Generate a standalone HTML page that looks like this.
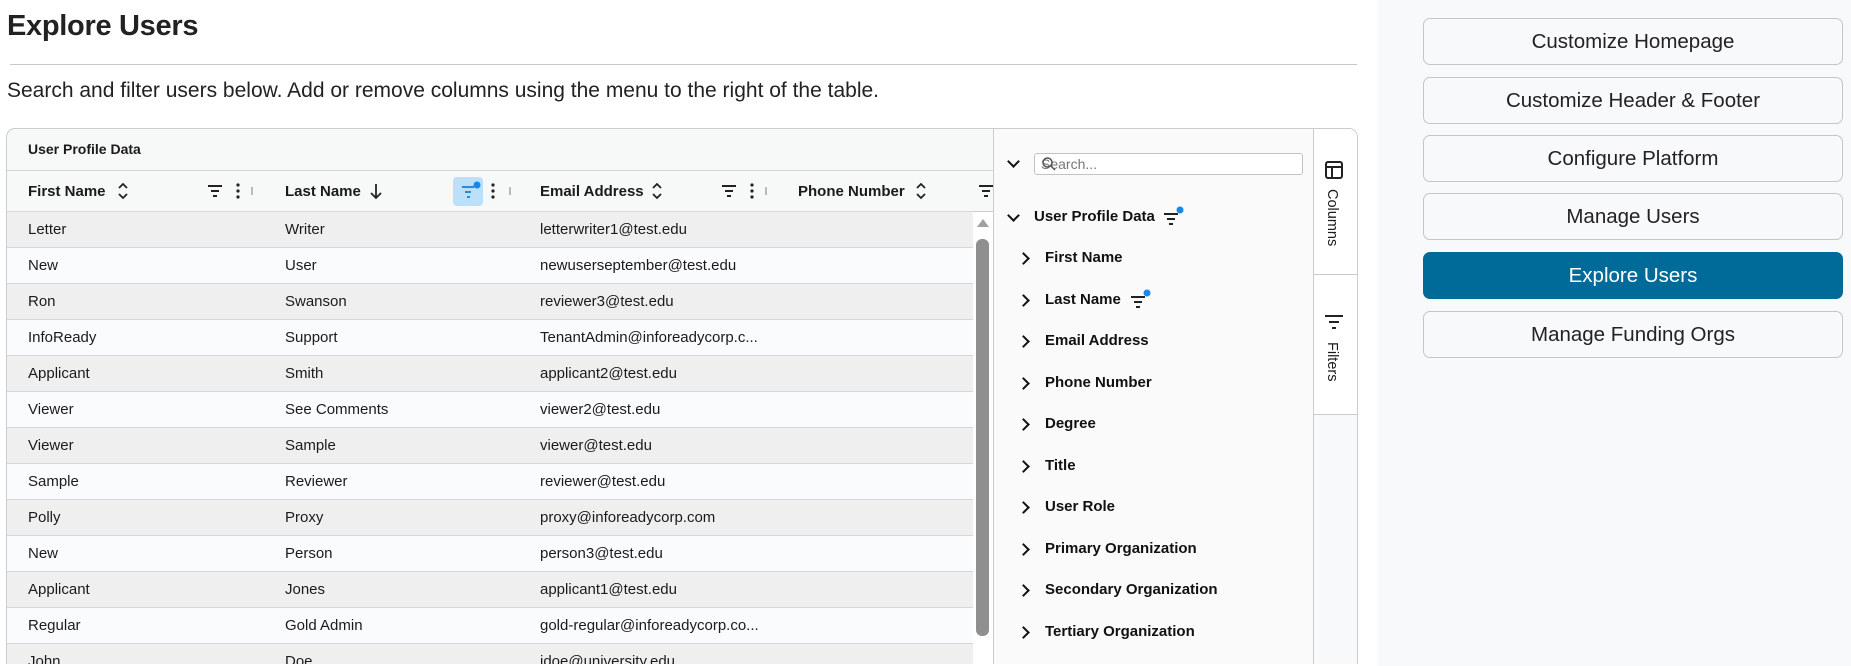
<!DOCTYPE html>
<html style="overflow:hidden;width:1851px;height:666px"><head><meta charset="utf-8"><style>
*{box-sizing:border-box;margin:0;padding:0}
body{width:1851px;height:666px;overflow:hidden;background:#fff;font-family:"Liberation Sans",sans-serif;color:#1b1b1b;position:relative}
.a{position:absolute}
h1{position:absolute;left:7px;top:10px;font-size:29px;font-weight:bold;color:#222;letter-spacing:-0.3px}
.hr{left:10px;top:64px;width:1347px;height:1px;background:#c8c8c8}
.sub{left:7px;top:79px;font-size:21px;color:#222}
.tbl{left:6px;top:128px;width:1352px;height:536px;border:1px solid #c9cdd1;border-bottom:none;border-radius:9px 9px 0 0;overflow:hidden;background:#f7f8f8}
.row{position:absolute;left:0;width:966px;height:36px;border-top:1px solid #d4d8dc;font-size:15px;line-height:35px}
.row span{position:absolute}
.hd{font-size:15px;font-weight:bold}
.rp{left:1378px;top:0;width:473px;height:666px;background:#f8f9fa}
.btn{position:absolute;left:1423px;width:420px;height:47px;border:1px solid #c4c6c8;border-radius:7px;background:#f8f9fa;font-size:20.5px;text-align:center;line-height:45px;color:#222}
.it{position:absolute;left:1045px;font-size:15px;font-weight:bold;color:#111}
.ch{position:absolute;left:1019px;width:9px;height:9px;border-right:2px solid #111;border-top:2px solid #111;transform:rotate(45deg)}
</style></head><body>
<h1>Explore Users</h1>
<div class="a hr"></div>
<div class="a sub">Search and filter users below. Add or remove columns using the menu to the right of the table.</div>
<div class="a tbl">
 <div class="a hd" style="left:21px;top:12px;font-size:14px">User Profile Data</div>
 <div class="a" style="left:0;top:41px;width:986px;height:1px;background:#d4d8dc"></div>
 <div class="a hd" style="left:21px;top:54px">First Name</div>
 <svg class="a" style="left:110px;top:52px" width="12" height="20"><path d="M2 7l4-4 4 4M2 13l4 4 4-4" fill="none" stroke="#222" stroke-width="1.8"/></svg>
 <div class="a hd" style="left:278px;top:54px">Last Name</div>
 <svg class="a" style="left:362px;top:52px" width="14" height="20"><path d="M7 3v14M2 12l5 5 5-5" fill="none" stroke="#222" stroke-width="1.8"/></svg>
 <div class="a hd" style="left:533px;top:54px">Email Address</div>
 <svg class="a" style="left:644px;top:52px" width="12" height="20"><path d="M2 7l4-4 4 4M2 13l4 4 4-4" fill="none" stroke="#222" stroke-width="1.8"/></svg>
 <div class="a hd" style="left:791px;top:54px">Phone Number</div>
 <svg class="a" style="left:908px;top:52px" width="12" height="20"><path d="M2 7l4-4 4 4M2 13l4 4 4-4" fill="none" stroke="#222" stroke-width="1.8"/></svg>
 <svg class="a" style="left:195px;top:50px" width="60" height="24"><g stroke="#222" stroke-width="2"><line x1="6" y1="7" x2="20" y2="7"/><line x1="9" y1="12" x2="17" y2="12"/><line x1="11" y1="17" x2="15" y2="17"/></g><g fill="#222"><circle cx="36" cy="6" r="1.6"/><circle cx="36" cy="12" r="1.6"/><circle cx="36" cy="18" r="1.6"/></g><line x1="50" y1="8" x2="50" y2="16" stroke="#bbb" stroke-width="2"/></svg>
 <div class="a" style="left:446px;top:48px;width:30px;height:29px;background:#bde0fa;border-radius:4px"></div>
 <svg class="a" style="left:452px;top:50px" width="60" height="24"><g stroke="#2a8ae0" stroke-width="2"><line x1="3" y1="8" x2="15" y2="8"/><line x1="6" y1="13" x2="12" y2="13"/><line x1="8" y1="18" x2="11" y2="18"/></g><circle cx="18" cy="6" r="3.5" fill="#1a86e8"/><g fill="#222"><circle cx="34" cy="6" r="1.6"/><circle cx="34" cy="12" r="1.6"/><circle cx="34" cy="18" r="1.6"/></g><line x1="51" y1="8" x2="51" y2="16" stroke="#bbb" stroke-width="2"/></svg>
 <svg class="a" style="left:709px;top:50px" width="60" height="24"><g stroke="#222" stroke-width="2"><line x1="6" y1="7" x2="20" y2="7"/><line x1="9" y1="12" x2="17" y2="12"/><line x1="11" y1="17" x2="15" y2="17"/></g><g fill="#222"><circle cx="36" cy="6" r="1.6"/><circle cx="36" cy="12" r="1.6"/><circle cx="36" cy="18" r="1.6"/></g><line x1="50" y1="8" x2="50" y2="16" stroke="#bbb" stroke-width="2"/></svg>
 <svg class="a" style="left:966px;top:50px" width="24" height="24"><g stroke="#222" stroke-width="2"><line x1="6" y1="7" x2="20" y2="7"/><line x1="9" y1="12" x2="17" y2="12"/><line x1="11" y1="17" x2="15" y2="17"/></g></svg>
 <div class="a" style="left:0;top:82px;width:986px;height:1px;background:#c9cdd1"></div>
 <div class="a" style="left:0;top:83px;width:986px;height:480px;background:#fafbfc"></div>
 <div class="row" style="top:82px;background:#efefef"><span style="left:21px">Letter</span><span style="left:278px">Writer</span><span style="left:533px">letterwriter1@test.edu</span></div>
 <div class="row" style="top:118px;background:#fafbfc"><span style="left:21px">New</span><span style="left:278px">User</span><span style="left:533px">newuserseptember@test.edu</span></div>
 <div class="row" style="top:154px;background:#efefef"><span style="left:21px">Ron</span><span style="left:278px">Swanson</span><span style="left:533px">reviewer3@test.edu</span></div>
 <div class="row" style="top:190px;background:#fafbfc"><span style="left:21px">InfoReady</span><span style="left:278px">Support</span><span style="left:533px">TenantAdmin@inforeadycorp.c...</span></div>
 <div class="row" style="top:226px;background:#efefef"><span style="left:21px">Applicant</span><span style="left:278px">Smith</span><span style="left:533px">applicant2@test.edu</span></div>
 <div class="row" style="top:262px;background:#fafbfc"><span style="left:21px">Viewer</span><span style="left:278px">See Comments</span><span style="left:533px">viewer2@test.edu</span></div>
 <div class="row" style="top:298px;background:#efefef"><span style="left:21px">Viewer</span><span style="left:278px">Sample</span><span style="left:533px">viewer@test.edu</span></div>
 <div class="row" style="top:334px;background:#fafbfc"><span style="left:21px">Sample</span><span style="left:278px">Reviewer</span><span style="left:533px">reviewer@test.edu</span></div>
 <div class="row" style="top:370px;background:#efefef"><span style="left:21px">Polly</span><span style="left:278px">Proxy</span><span style="left:533px">proxy@inforeadycorp.com</span></div>
 <div class="row" style="top:406px;background:#fafbfc"><span style="left:21px">New</span><span style="left:278px">Person</span><span style="left:533px">person3@test.edu</span></div>
 <div class="row" style="top:442px;background:#efefef"><span style="left:21px">Applicant</span><span style="left:278px">Jones</span><span style="left:533px">applicant1@test.edu</span></div>
 <div class="row" style="top:478px;background:#fafbfc"><span style="left:21px">Regular</span><span style="left:278px">Gold Admin</span><span style="left:533px">gold-regular@inforeadycorp.co...</span></div>
 <div class="row" style="top:514px;background:#efefef"><span style="left:21px">John</span><span style="left:278px">Doe</span><span style="left:533px">jdoe@university.edu</span></div>
 <div class="a" style="left:966px;top:83px;width:20px;height:480px;background:#fff"></div>
 <div class="a" style="left:970px;top:90px;width:0;height:0;border-left:6px solid transparent;border-right:6px solid transparent;border-bottom:8px solid #a0a0a0"></div>
 <div class="a" style="left:969px;top:110px;width:13px;height:397px;background:#8f8f8f;border-radius:6px"></div>
 <div class="a" style="left:986px;top:0;width:321px;height:560px;background:#fafafa;border-left:1px solid #c9cdd1;border-right:1px solid #c9cdd1"></div>
 <div class="a" style="left:1307px;top:0;width:45px;height:560px;background:#f8f9fa"></div>
 <div class="a" style="left:1307px;top:0;width:45px;height:286px;background:#fff;border-bottom:1px solid #c9cdd1"></div>
 <div class="a" style="left:1307px;top:0;width:45px;height:146px;border-bottom:1px solid #c9cdd1"></div>
</div>
<div class="ch" style="left:1009px;top:157px;transform:rotate(135deg)"></div>
<div class="a" style="left:1034px;top:153px;width:269px;height:22px;border:1px solid #c2c2c2;border-radius:3px;background:#fff;font-size:14px;color:#777;padding-left:6px;line-height:20px">Search...</div>
<svg class="a" style="left:1041px;top:156px" width="16" height="16"><circle cx="6.5" cy="6.5" r="4.5" fill="none" stroke="#555" stroke-width="1.5"/><line x1="10" y1="10" x2="14" y2="14" stroke="#555" stroke-width="1.5"/></svg>
<div class="ch" style="left:1009px;top:211px;transform:rotate(135deg)"></div>
<div class="it" style="left:1034px;top:208px;font-weight:bold">User Profile Data</div>
<svg class="a" style="left:1162px;top:206px" width="24" height="20"><g stroke="#222" stroke-width="2"><line x1="2" y1="8" x2="16" y2="8"/><line x1="5" y1="13" x2="13" y2="13"/><line x1="7" y1="18" x2="11" y2="18"/></g><circle cx="18" cy="4" r="3.5" fill="#1a86e8"/></svg>
<div class="ch" style="top:254px"></div><div class="it" style="top:249px">First Name</div>
<div class="ch" style="top:296px"></div><div class="it" style="top:291px">Last Name</div>
<svg class="a" style="left:1129px;top:289px" width="24" height="20"><g stroke="#222" stroke-width="2"><line x1="2" y1="8" x2="16" y2="8"/><line x1="5" y1="13" x2="13" y2="13"/><line x1="7" y1="18" x2="11" y2="18"/></g><circle cx="18" cy="4" r="3.5" fill="#1a86e8"/></svg>
<div class="ch" style="top:337px"></div><div class="it" style="top:332px">Email Address</div>
<div class="ch" style="top:379px"></div><div class="it" style="top:374px">Phone Number</div>
<div class="ch" style="top:420px"></div><div class="it" style="top:415px">Degree</div>
<div class="ch" style="top:462px"></div><div class="it" style="top:457px">Title</div>
<div class="ch" style="top:503px"></div><div class="it" style="top:498px">User Role</div>
<div class="ch" style="top:545px"></div><div class="it" style="top:540px">Primary Organization</div>
<div class="ch" style="top:586px"></div><div class="it" style="top:581px">Secondary Organization</div>
<div class="ch" style="top:628px"></div><div class="it" style="top:623px">Tertiary Organization</div>
<svg class="a" style="left:1325px;top:161px" width="18" height="18"><rect x="1" y="1" width="16" height="16" rx="2" fill="none" stroke="#222" stroke-width="2"/><line x1="1" y1="6" x2="17" y2="6" stroke="#222" stroke-width="2"/><line x1="7" y1="6" x2="7" y2="17" stroke="#222" stroke-width="2"/></svg>
<div class="a" style="left:1324px;top:189px;font-size:14.5px;writing-mode:vertical-rl">Columns</div>
<svg class="a" style="left:1324px;top:314px" width="20" height="16"><g stroke="#222" stroke-width="2"><line x1="1" y1="2" x2="19" y2="2"/><line x1="5" y1="8" x2="15" y2="8"/><line x1="8" y1="14" x2="12" y2="14"/></g></svg>
<div class="a" style="left:1324px;top:342px;font-size:14.5px;writing-mode:vertical-rl">Filters</div>
<div class="a rp"></div>
<div class="btn" style="top:18px">Customize Homepage</div>
<div class="btn" style="top:77px">Customize Header &amp; Footer</div>
<div class="btn" style="top:135px">Configure Platform</div>
<div class="btn" style="top:193px">Manage Users</div>
<div class="btn" style="top:252px;background:#006b99;border-color:#006b99;color:#fff">Explore Users</div>
<div class="btn" style="top:311px">Manage Funding Orgs</div>
</body></html>
